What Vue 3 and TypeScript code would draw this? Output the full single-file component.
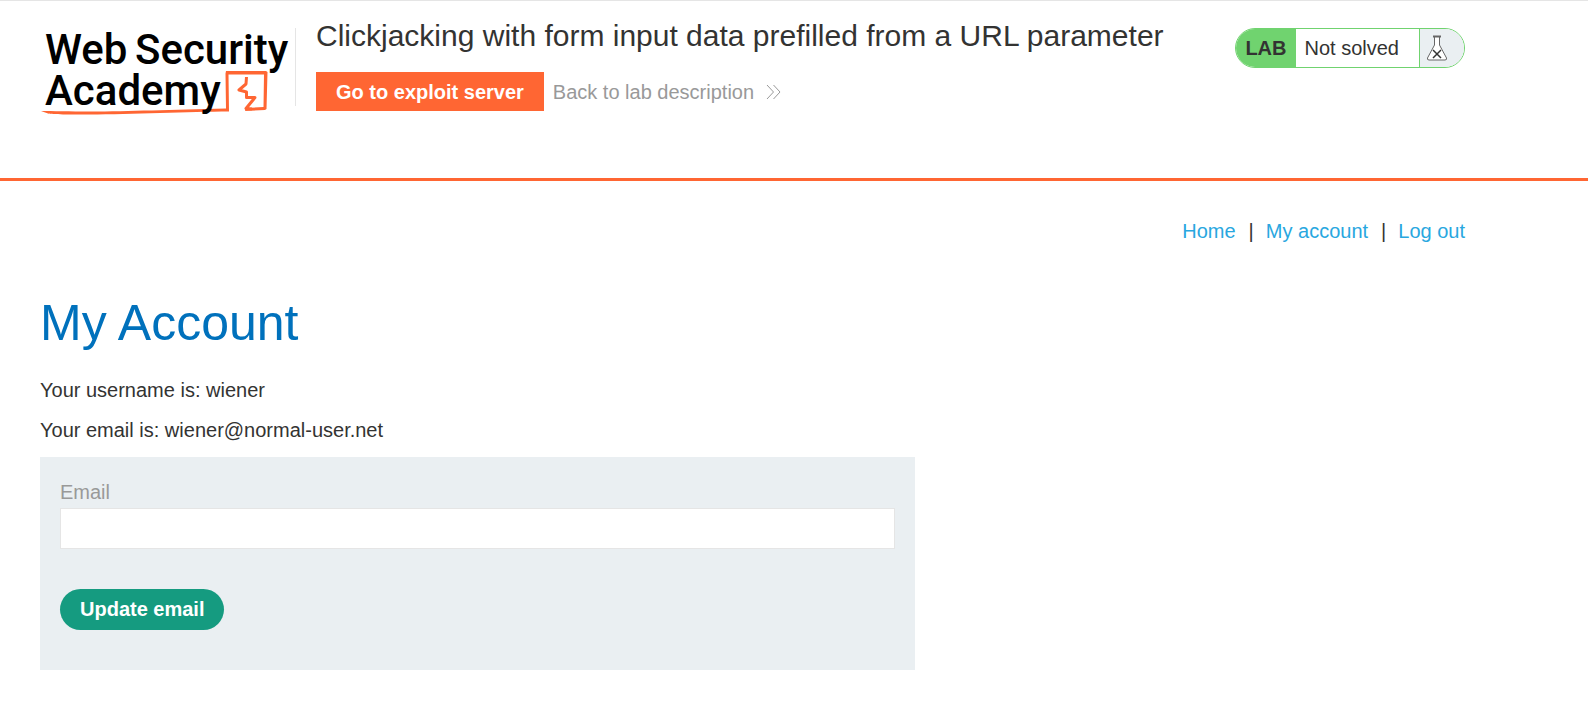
<script setup lang="ts">
import { ref } from 'vue'

interface NavLink {
  label: string
  href: string
}

const labTitle = 'Clickjacking with form input data prefilled from a URL parameter'
const navLinks: NavLink[] = [
  { label: 'Home', href: '#home' },
  { label: 'My account', href: '#my-account' },
  { label: 'Log out', href: '#logout' },
]
const user = { name: 'wiener', email: 'wiener@normal-user.net' }
const email = ref('')
</script>

<template>
  <div class="page">
    <header class="lab-header">
      <div class="container header-row">
        <a class="logo" href="#academy" aria-label="Web Security Academy">
          <svg width="252" height="92" viewBox="0 0 252 92">
            <path
              fill="#ff6633"
              d="M1 86C12 86 30 86.500 50 86.500C90 86.500 130 84.500 186 83.500L185.500 48.500 186 46 226 46 227.500 47 226.500 84 225 85 205 86 206 83 223.500 82 224 49.500 188.500 49.500 189 86.500C150 86.500 90 89.500 50 89.500C30 89.500 12 89.500 8 88.500Z"
            />
            <path
              fill="none"
              stroke="#ff6633"
              stroke-width="3"
              stroke-linejoin="round"
              d="M206.500 52 206 59 199 65 206.500 67 206.500 72.500 215 72.500 206 83.500 212 84"
            />
            <g class="logo-text">
              <text x="5" y="39">Web</text>
              <text x="95" y="39">Security</text>
              <text x="5" y="80">Academy</text>
            </g>
          </svg>
        </a>
        <div class="title-block">
          <h2>{{ labTitle }}</h2>
          <div class="actions">
            <a class="exploit" href="#exploit-server">Go to exploit server</a>
            <a class="back" href="#lab-description">
              Back to lab description
              <svg width="15" height="16" viewBox="0 0 15 16" aria-hidden="true">
                <path d="M1 1 7.500 8 1 15M7.500 1 14 8 7.500 15" fill="none" stroke="#999" />
              </svg>
            </a>
          </div>
        </div>
        <div class="status">
          <span class="status-tag">LAB</span>
          <span class="status-text">Not solved</span>
          <span class="status-icon">
            <svg width="22" height="26" viewBox="0 0 22 26" aria-hidden="true">
              <path d="M8.500 2V10L1.500 23Q1 25 3 25H19Q21 25 20.500 23L13.500 10V2" fill="#fff" stroke="#666" />
              <path d="M7 1.500H15" stroke="#666" stroke-width="2" />
              <path d="M7 15 15 23M15 15 7 23" stroke="#333332" stroke-width="1.500" />
            </svg>
          </span>
        </div>
      </div>
    </header>

    <main class="container">
      <nav class="top-links">
        <template v-for="(link, i) in navLinks" :key="link.href">
          <span v-if="i > 0">|</span>
          <a :href="link.href">{{ link.label }}</a>
        </template>
      </nav>
      <h1>My Account</h1>
      <p>Your username is: {{ user.name }}</p>
      <p>Your email is: {{ user.email }}</p>
      <form class="email-form" @submit.prevent>
        <label for="email">Email</label>
        <input id="email" v-model="email" type="email" />
        <button type="submit">Update email</button>
      </form>
    </main>
  </div>
</template>

<style>
body {
  margin: 0;
  background: #fff;
}
</style>

<style scoped>
* {
  box-sizing: border-box;
}
.page {
  border-top: 1px solid #e5e5e5;
  font: 20px/30px "Liberation Sans", Arial, sans-serif;
  color: #333332;
}
a {
  text-decoration: none;
}
.container {
  max-width: 1505px;
  padding: 0 40px;
}
.lab-header {
  border-bottom: 3px solid #ff6633;
}
.header-row {
  display: flex;
  align-items: flex-start;
  padding-top: 12px;
  padding-bottom: 61px;
}
.logo {
  flex: none;
  margin-top: 12px;
  height: 92px;
}
.logo svg {
  display: block;
}
.logo-text {
  font: 500 42px Roboto, sans-serif;
  fill: #000;
}
.title-block {
  position: relative;
  flex: 1;
  margin-left: 3px;
  padding-left: 21px;
}
.title-block::before {
  content: "";
  position: absolute;
  left: 0;
  top: 15px;
  height: 78px;
  border-left: 1px solid #e5e5e5;
}
h2 {
  margin: 0;
  font-size: 30px;
  line-height: 45px;
  font-weight: 400;
}
.actions {
  display: flex;
  align-items: center;
  gap: 9px;
  margin-top: 14px;
}
.exploit {
  padding: 5px 20px 4px;
  background: #ff6633;
  color: #fff;
  font-weight: 700;
}
.back {
  display: flex;
  align-items: center;
  gap: 12px;
  color: #999;
}
.status {
  display: flex;
  flex: none;
  height: 40px;
  margin-top: 15px;
  border: 1px solid #70d36f;
  border-radius: 20px;
  overflow: hidden;
  line-height: 38px;
}
.status-tag {
  padding: 0 9px;
  background: #70d36f;
  font-weight: 700;
}
.status-text {
  padding: 0 20px 0 9px;
}
.status-icon {
  display: flex;
  align-items: center;
  width: 45px;
  padding-left: 6px;
  border-left: 1px solid #70d36f;
  background: #eaeff2;
}
.top-links {
  display: flex;
  justify-content: flex-end;
  gap: 12px;
  padding-top: 35px;
}
.top-links span {
  margin-left: 1px;
}
.top-links a {
  color: #29a7df;
}
h1 {
  margin: 40px 0 14px;
  font-size: 50px;
  line-height: 75px;
  font-weight: 400;
  color: #0071bc;
}
p {
  margin: 0 0 10px;
}
.email-form {
  display: flex;
  flex-direction: column;
  align-items: flex-start;
  max-width: 875px;
  margin-top: 12px;
  padding: 20px 20px 40px;
  background: #eaeff2;
}
label {
  color: #999;
  margin-bottom: 1px;
}
input {
  width: 100%;
  height: 41px;
  padding: 0 10px;
  border: 1px solid #e5e5e5;
  border-radius: 0;
  font: inherit;
  color: inherit;
  outline: none;
}
button {
  height: 41px;
  margin-top: 40px;
  padding: 0 20px 2px;
  border: 0;
  border-radius: 21px;
  background: #159b80;
  color: #fff;
  font: inherit;
  font-weight: 700;
}
</style>
